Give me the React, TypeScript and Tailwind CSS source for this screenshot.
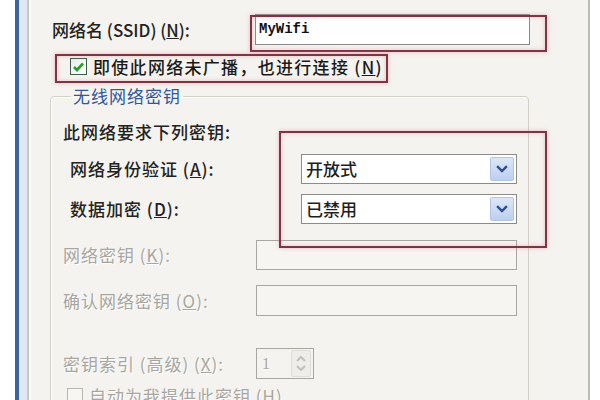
import React from "react";

const cjk = { fontFamily: '"Noto Sans CJK SC", "Noto Sans", sans-serif' };

function Chevron() {
  return (
    <div className="w-[24px] h-[24px] mr-[2px] flex items-center justify-center border border-[#b3c5e6] bg-gradient-to-b from-[#dde7f8] to-[#bccff0] rounded-[2px]">
      <svg width="12" height="10" viewBox="0 0 12 10">
        <path d="M2 3 L6 7 L10 3" fill="none" stroke="#2d4d8c" strokeWidth="2.4" strokeLinecap="square" />
      </svg>
    </div>
  );
}

function Select({ value }: { value: string }) {
  return (
    <div className="w-[216px] h-[30px] border border-[#8c8c8c] bg-white flex items-center justify-between">
      <span className="pl-[4px] text-[17px] leading-[18px] font-medium text-[#1e1e1e]">{value}</span>
      <Chevron />
    </div>
  );
}

const disabledText = "text-[#a8a6a0] tracking-[1px] [text-shadow:1px_1px_0_#ffffff]";
const darkText = "text-[17px] leading-[18px] font-medium text-[#222] tracking-[1px]";

export default function App() {
  return (
    <div className="relative w-[600px] h-[400px] overflow-hidden flex bg-white" style={cjk}>
      <div className="w-[15px] bg-white" />
      <div className="w-[4px] bg-[#3a66a2]" />
      <div className="w-[8px] bg-[#dfe8f4]" />
      <div className="w-[2px] bg-[#c9c6bf]" />
      <div className="w-[2px] bg-[#fbfaf8]" />
      <div className="w-[557px] bg-[#f5f3ef] flex flex-col">
        <div className="h-[4px] overflow-hidden">
          <div className="-mt-[13px] pl-[10px] text-[15px] leading-[16px] text-[#b5b3ad] tracking-[1px]">
            此网络的无线网络属性　　　　　　　网络名和密钥
          </div>
        </div>
        {/* SSID row */}
        <div className="mt-[14px] h-[31px] flex items-center pl-[21px]">
          <div className="w-[203px] text-[17px] leading-[18px] font-medium text-[#222]">
            网络名 (SSID) (<span className="underline">N</span>):
          </div>
          <div className="w-[275px] h-[31px] border border-[#8a8a8a] bg-white flex items-center pl-[3px]">
            <span className="font-bold text-[14px] text-[#111]" style={{ fontFamily: '"Liberation Mono", monospace' }}>
              MyWifi
            </span>
          </div>
        </div>
        {/* checkbox row */}
        <div className="mt-[13px] h-[17px] flex items-center pl-[39px]">
          <div className="w-[17px] h-[17px] border border-[#3d5c4a] bg-gradient-to-br from-[#e8ece8] to-[#ffffff] flex items-center justify-center">
            <svg width="13" height="12" viewBox="0 0 13 12">
              <path d="M2 6 L5 9 L11 2.5" fill="none" stroke="#26a026" strokeWidth="2.6" />
            </svg>
          </div>
          <span className="ml-[6px] text-[17px] leading-[18px] font-medium tracking-[1.3px] text-[#1a1a1a]">
            即使此网络未广播，也进行连接 (<span className="underline">N</span>)
          </span>
        </div>
        {/* group box */}
        <fieldset className="mt-[12px] ml-[19px] w-[479px] border border-[#d3d0c8] rounded-[4px] pl-[12px] shadow-[inset_1px_1px_0_#ffffff]">
          <legend className="ml-[8px] px-[2px] text-[17px] leading-[18px] text-[#2f58a0] tracking-[1px]">
            无线网络密钥
          </legend>
          <div className={`mt-[18px] h-[18px] ${darkText}`}>此网络要求下列密钥:</div>
          <div className="mt-[13px] h-[30px] flex items-center pl-[7px]">
            <div className={`w-[231px] ${darkText}`}>
              网络身份验证 (<span className="underline">A</span>):
            </div>
            <Select value="开放式" />
          </div>
          <div className="mt-[10px] h-[30px] flex items-center pl-[7px]">
            <div className={`w-[231px] ${darkText}`}>
              数据加密 (<span className="underline">D</span>):
            </div>
            <Select value="已禁用" />
          </div>
          <div className="mt-[16px] h-[30px] flex items-center">
            <div className={`w-[193px] text-[17px] leading-[18px] ${disabledText}`}>
              网络密钥 (<span className="underline">K</span>):
            </div>
            <div className="w-[261px] h-[30px] border border-[#a9a7a1] bg-[#f7f5f2]" />
          </div>
          <div className="mt-[15px] h-[31px] flex items-center">
            <div className={`w-[193px] text-[17px] leading-[18px] ${disabledText}`}>
              确认网络密钥 (<span className="underline">O</span>):
            </div>
            <div className="w-[261px] h-[31px] border border-[#a9a7a1] bg-[#f7f5f2]" />
          </div>
          <div className="mt-[32px] h-[31px] flex items-center">
            <div className={`w-[193px] text-[17px] leading-[18px] ${disabledText}`}>
              密钥索引 (高级) (<span className="underline">X</span>):
            </div>
            <div className="w-[58px] h-[31px] border border-[#a9a7a1] bg-[#f5f3ef] flex items-center justify-between">
              <span className={`pl-[5px] text-[16px] ${disabledText}`} style={{ fontFamily: '"Liberation Serif", serif' }}>
                1
              </span>
              <div className="w-[20px] h-[27px] mr-[2px] flex flex-col items-center justify-center gap-[3px] bg-[#eeede9] border border-[#e0ded8] rounded-[2px]">
                <svg width="10" height="6" viewBox="0 0 10 6">
                  <path d="M1 5 L5 1 L9 5" fill="none" stroke="#c2c0ba" strokeWidth="2" />
                </svg>
                <svg width="10" height="6" viewBox="0 0 10 6">
                  <path d="M1 1 L5 5 L9 1" fill="none" stroke="#c2c0ba" strokeWidth="2" />
                </svg>
              </div>
            </div>
          </div>
          <div className="mt-[8px] h-[17px] flex items-center pl-[4px]">
            <div className="w-[16px] h-[16px] border border-[#b9b7b1] bg-[#f7f6f3]" />
            <span className={`ml-[6px] text-[17px] leading-[18px] ${disabledText}`}>
              自动为我提供此密钥 (<span className="underline">H</span>)
            </span>
          </div>
        </fieldset>
      </div>
      <div className="w-[2px] bg-[#bebbb4]" />
      <div className="w-[10px] bg-white" />

      {/* red annotation boxes */}
      <div className="absolute left-[250px] top-[15px] w-[297px] h-[37px] border-2 border-[#7d3444] shadow-[0_0_4px_rgba(220,140,150,0.6),inset_0_0_4px_rgba(220,140,150,0.5)]" />
      <div className="absolute left-[55px] top-[54px] w-[333px] h-[29px] border-2 border-[#7d3444] shadow-[0_0_4px_rgba(220,140,150,0.6),inset_0_0_4px_rgba(220,140,150,0.5)]" />
      <div className="absolute left-[279px] top-[131px] w-[268px] h-[117px] border-2 border-[#7d3444] shadow-[0_0_4px_rgba(220,140,150,0.6),inset_0_0_4px_rgba(220,140,150,0.5)]" />
    </div>
  );
}
